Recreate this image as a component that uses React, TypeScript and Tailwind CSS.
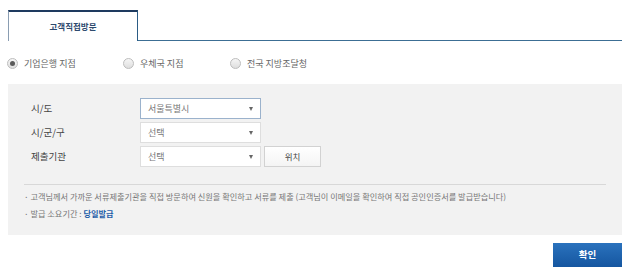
import React from 'react';

const font = { fontFamily: '"Noto Sans CJK KR", "Noto Sans", sans-serif' };

function Radio({ label, checked, className }: { label: string; checked?: boolean; className?: string }) {
    return (
        <label className={`flex items-center gap-[6px] ${className ?? ''}`}>
            <span className="w-[11px] h-[11px] rounded-full border border-[#bdbdbd] bg-gradient-to-b from-[#f6f6f6] to-[#dedede] flex items-center justify-center">
                {checked && <span className="w-[5px] h-[5px] rounded-full bg-[#5a5a5a]" />}
            </span>
            <span className="text-[9px] text-[#666] leading-none">{label}</span>
        </label>
    );
}

function Select({ value, focused }: { value: string; focused?: boolean }) {
    return (
        <div
            className={`w-[121px] h-[21px] bg-white flex items-center justify-between pl-[7px] pr-[7px] border ${
                focused ? 'border-[#9bb2cc]' : 'border-[#dedede]'
            }`}
        >
            <span className="text-[9px] text-[#777] leading-none">{value}</span>
            <span className="w-0 h-0 border-l-[2.5px] border-r-[2.5px] border-t-[4px] border-l-transparent border-r-transparent border-t-[#666]" />
        </div>
    );
}

export default function App() {
    return (
        <div className="w-[640px] h-[278px] bg-white overflow-hidden" style={font}>
            {/* Tabs */}
            <div className="flex w-[614px] ml-[8px] pt-[10px]">
                <div className="w-[130px] h-[31px] border-t-2 border-t-[#1e3a5f] border-l border-l-[#8a9db2] border-r border-r-[#2b5c85] flex items-center justify-center">
                    <span className="text-[8.5px] font-bold text-[#2e4a6e] leading-none">고객직접방문</span>
                </div>
                <div className="flex-1 border-b border-b-[#3c6e94]" />
            </div>

            {/* Radios */}
            <div className="flex items-center h-[22px] mt-[11px] ml-[7px]">
                <Radio label="기업은행 지점" checked className="w-[116px]" />
                <Radio label="우체국 지점" className="w-[107px]" />
                <Radio label="전국 지방조달청" />
            </div>

            {/* Panel */}
            <div className="w-[614px] ml-[8px] mt-[10px] h-[151px] bg-[#f2f2f2] pt-[14px]">
                <div className="flex flex-col gap-[3px]">
                    <div className="flex items-center">
                        <span className="w-[132px] pl-[23px] text-[9.5px] text-[#444]">시/도</span>
                        <Select value="서울특별시" focused />
                    </div>
                    <div className="flex items-center">
                        <span className="w-[132px] pl-[23px] text-[9.5px] text-[#444]">시/군/구</span>
                        <Select value="선택" />
                    </div>
                    <div className="flex items-center">
                        <span className="w-[132px] pl-[23px] text-[9.5px] text-[#444]">제출기관</span>
                        <Select value="선택" />
                        <button className="ml-[3px] w-[57px] h-[21px] bg-gradient-to-b from-white to-[#f4f4f4] border border-[#d2d2d2] text-[8.5px] text-[#444] leading-none">
                            위치
                        </button>
                    </div>
                </div>

                <div className="mx-[16px] mt-[17px] border-t border-[#d8d8d8]" />

                <div className="mt-[4px] pl-[16px] flex flex-col gap-[2px] text-[8.2px] text-[#777] leading-[15px]">
                    <p>· 고객님께서 가까운 서류제출기관을 직접 방문하여 신원을 확인하고 서류를 제출 (고객님이 이메일을 확인하여 직접 공인인증서를 발급받습니다)</p>
                    <p>
                        · 발급 소요기간 : <span className="text-[#1f5ea8] font-bold">당일발급</span>
                    </p>
                </div>
            </div>

            {/* Actions */}
            <div className="flex justify-end w-[614px] ml-[8px] mt-[8px]">
                <button className="w-[69px] h-[24px] bg-gradient-to-b from-[#2a72bd] to-[#1556a0] text-white text-[9.5px] font-bold leading-none">
                    확인
                </button>
            </div>
        </div>
    );
}
